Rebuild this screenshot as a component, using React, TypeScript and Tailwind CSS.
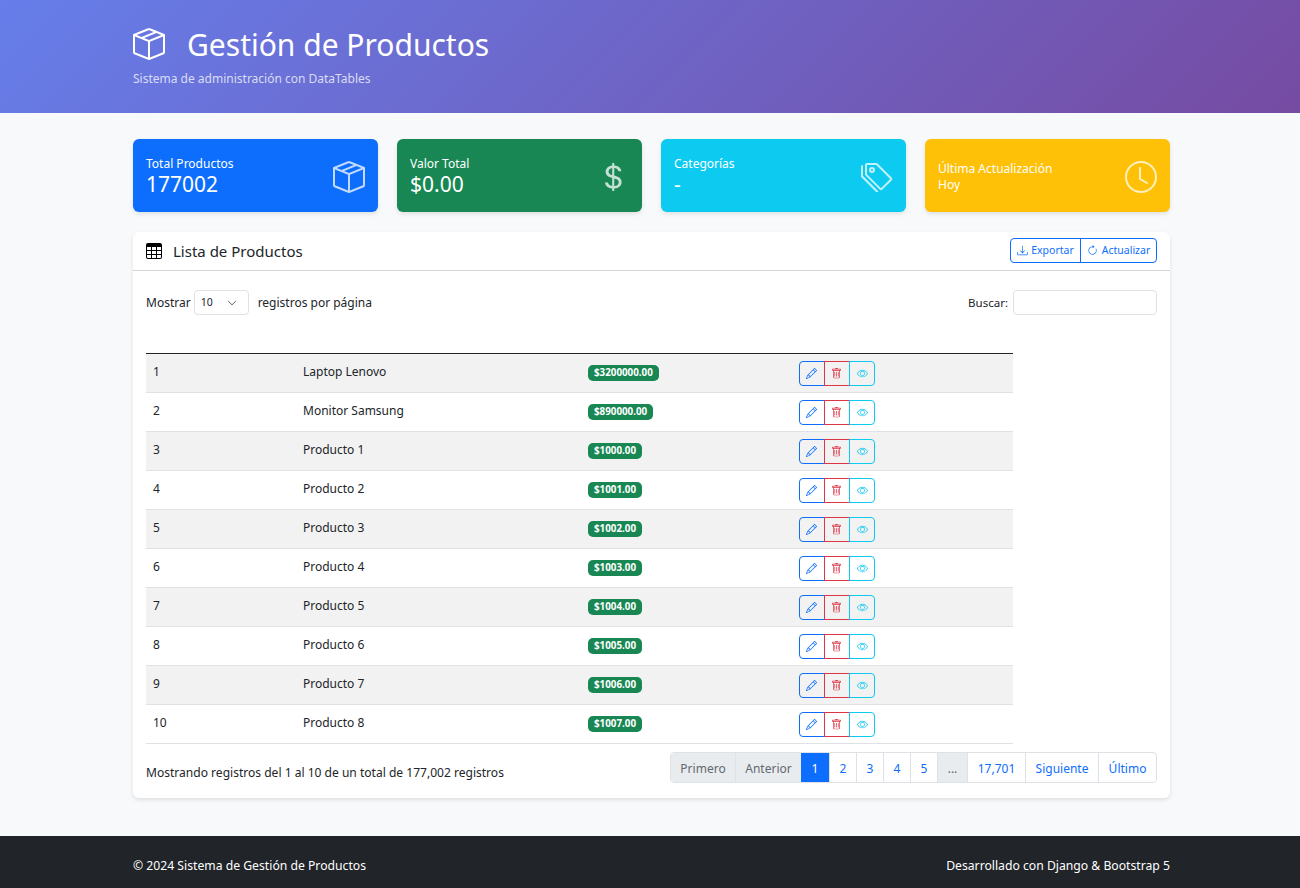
import React from 'react';
import {
  BsArrowClockwise,
  BsBoxSeam,
  BsChevronDown,
  BsClock,
  BsCurrencyDollar,
  BsDownload,
  BsEye,
  BsPencil,
  BsTable,
  BsTags,
  BsTrash,
} from 'react-icons/bs';

const rows = [
  { id: 1, name: 'Laptop Lenovo', price: '$3200000.00' },
  { id: 2, name: 'Monitor Samsung', price: '$890000.00' },
  { id: 3, name: 'Producto 1', price: '$1000.00' },
  { id: 4, name: 'Producto 2', price: '$1001.00' },
  { id: 5, name: 'Producto 3', price: '$1002.00' },
  { id: 6, name: 'Producto 4', price: '$1003.00' },
  { id: 7, name: 'Producto 5', price: '$1004.00' },
  { id: 8, name: 'Producto 6', price: '$1005.00' },
  { id: 9, name: 'Producto 7', price: '$1006.00' },
  { id: 10, name: 'Producto 8', price: '$1007.00' },
];

const StatCard: React.FC<{ className: string; icon: React.ReactNode; children: React.ReactNode }> = ({
  className,
  icon,
  children,
}) => (
  <div
    className={`flex h-[73px] flex-1 items-center justify-between rounded-md pl-[13px] pr-[13px] text-white shadow-[0_2px_4px_rgba(0,0,0,0.1)] ${className}`}
  >
    <div>{children}</div>
    <div className="mt-[2px] text-[32px] text-white/75">{icon}</div>
  </div>
);

const PageButton: React.FC<{ className: string; children: React.ReactNode }> = ({ className, children }) => (
  <span className={`flex h-full items-center justify-center border-l border-[#dee2e6] pt-[2px] first:border-l-0 ${className}`}>
    {children}
  </span>
);

export default function App() {
  return (
    <div className="flex min-h-[888px] flex-col bg-[#f8f9fa] font-['Noto_Sans',sans-serif] text-[13px] text-[#212529]">
      <header className="h-[113px] bg-[linear-gradient(135deg,#667eea_0%,#764ba2_100%)] pl-[133px] pr-[130px] pt-[24px] text-white">
        <div className="flex h-[40px] items-center">
          <BsBoxSeam className="text-[32px]" />
          <h1 className="ml-[22px] pt-px text-[30px] leading-[40px]">Gestión de Productos</h1>
        </div>
        <p className="mt-[4px] pt-px text-[12px] leading-[20px] text-white/75">Sistema de administración con DataTables</p>
      </header>

      <main className="flex-1 pl-[133px] pr-[130px] pt-[26px]">
        <div className="flex gap-[19px]">
          <StatCard className="bg-[#0d6efd]" icon={<BsBoxSeam />}>
            <div className="text-[12px] leading-[16px]">Total Productos</div>
            <div className="text-[21px] leading-[24px]">177002</div>
          </StatCard>
          <StatCard className="bg-[#198754]" icon={<BsCurrencyDollar />}>
            <div className="text-[12px] leading-[16px]">Valor Total</div>
            <div className="text-[21px] leading-[24px]">$0.00</div>
          </StatCard>
          <StatCard className="bg-[#0dcaf0]" icon={<BsTags />}>
            <div className="text-[12px] leading-[16px]">Categorías</div>
            <div className="text-[21px] leading-[24px]">-</div>
          </StatCard>
          <StatCard className="bg-[#ffc107]" icon={<BsClock />}>
            <div className="pt-[2px] text-[12px] leading-[16px]">Última Actualización</div>
            <div className="text-[12px] leading-[16px]">Hoy</div>
          </StatCard>
        </div>

        <section className="mt-[20px] h-[566px] rounded-md bg-white shadow-[0_2px_4px_rgba(0,0,0,0.1)]">
          <div className="flex h-[39px] items-center justify-between border-b border-[#d3d4d5] px-[13px]">
            <div className="flex items-center">
              <BsTable className="text-[16px] text-black" />
              <h2 className="ml-[11px] text-[15px]">Lista de Productos</h2>
            </div>
            <div className="-mt-px flex h-[25px] rounded border border-[#0d6efd] text-[10.5px] text-[#0d6efd]">
              <span className="flex w-[69px] items-center justify-center gap-[3px]">
                <BsDownload className="text-[11px]" /> Exportar
              </span>
              <span className="flex w-[76px] items-center justify-center gap-[4px] border-l border-[#0d6efd]">
                <BsArrowClockwise className="text-[11px]" /> Actualizar
              </span>
            </div>
          </div>

          <div className="px-[13px]">
            <div className="mt-[19px] flex h-[25px] items-center justify-between text-[12px]">
              <div className="flex items-center">
                <span>Mostrar</span>
                <span className="ml-[3px] flex h-[25px] w-[55px] items-center justify-between rounded border border-[#dee2e6] pl-[6px] pr-[11px] text-[10.5px]">
                  10
                  <BsChevronDown className="text-[10px]" />
                </span>
                <span className="ml-[9px]">registros por página</span>
              </div>
              <div className="flex items-center">
                <span className="text-[11.5px]">Buscar:</span>
                <input className="ml-[5px] h-[25px] w-[144px] rounded border border-[#dee2e6] bg-white" />
              </div>
            </div>

            <table className="mt-[38px] w-[867px] table-fixed border-t border-[#212529] text-[12px]">
              <tbody>
                {rows.map((row, i) => (
                  <tr key={row.id} className={`h-[39px] border-b border-[#dee2e6] ${i % 2 === 0 ? 'bg-[#f2f2f2]' : 'bg-white'}`}>
                    <td className="w-[150px] px-[7px] pb-[3px]">{row.id}</td>
                    <td className="w-[285px] px-[7px] pb-[3px]">{row.name}</td>
                    <td className="w-[211px] px-[7px] pb-[3px]">
                      <span className="inline-block h-[16px] rounded-[5px] bg-[#198754] px-[6px] text-[9.8px] font-bold leading-[16px] text-white">
                        {row.price}
                      </span>
                    </td>
                    <td className="px-[7px]">
                      <div className="flex h-[25px] w-[76px] text-[11px]">
                        <span className="flex w-[26px] items-center justify-center rounded-l border border-[#0d6efd] pr-[2px] text-[#0d6efd]">
                          <BsPencil />
                        </span>
                        <span className="-ml-px flex w-[26px] items-center justify-center border border-[#dc3545] pr-[2px] text-[#dc3545]">
                          <BsTrash />
                        </span>
                        <span className="-ml-px flex w-[26px] items-center justify-center rounded-r border border-[#0dcaf0] text-[#0dcaf0]">
                          <BsEye />
                        </span>
                      </div>
                    </td>
                  </tr>
                ))}
              </tbody>
            </table>

            <div className="mt-[8px] flex items-center justify-between">
              <span className="pt-[12px] text-[12.05px]">Mostrando registros del 1 al 10 de un total de 177,002 registros</span>
              <div className="flex h-[31px] w-[487px] overflow-hidden rounded border border-[#dee2e6] text-[12px] text-[#0d6efd]">
                <PageButton className="w-[64px] bg-[#e9ecef] text-[#62696f]">Primero</PageButton>
                <PageButton className="w-[66px] bg-[#e9ecef] text-[#62696f]">Anterior</PageButton>
                <PageButton className="w-[28px] border-l-0 bg-[#0d6efd] text-white">1</PageButton>
                <PageButton className="w-[27px]">2</PageButton>
                <PageButton className="w-[27px]">3</PageButton>
                <PageButton className="w-[27px]">4</PageButton>
                <PageButton className="w-[27px]">5</PageButton>
                <PageButton className="w-[30px] bg-[#e9ecef] text-[#62696f]">...</PageButton>
                <PageButton className="w-[58px]">17,701</PageButton>
                <PageButton className="w-[73px]">Siguiente</PageButton>
                <PageButton className="w-[58px]">Último</PageButton>
              </div>
            </div>
          </div>
        </section>
      </main>

      <footer className="flex h-[52px] items-center justify-between bg-[#212529] pl-[133px] pr-[130px] pt-[8px] text-[12.2px] text-white">
        <span>© 2024 Sistema de Gestión de Productos</span>
        <span>Desarrollado con Django &amp; Bootstrap 5</span>
      </footer>
    </div>
  );
}
